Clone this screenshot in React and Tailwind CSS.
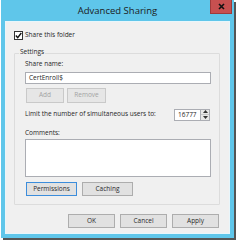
import React from "react";

const font = { fontFamily: '"Open Sans", "Noto Sans", sans-serif' };

const Btn = ({ children, className = "", disabled = false }) => (
  <div
    className={`flex items-center justify-center border text-[6.5px] ${
      disabled
        ? "border-[#c9c9c9] bg-[#e6e6e6] text-[#a3a3a3]"
        : "border-[#adadad] bg-[#e1e1e1] text-[#2a2a2a]"
    } ${className}`}
  >
    {children}
  </div>
);

const App = () => {
  return (
    <div className="w-[241px] h-[244px] bg-white" style={font}>
      <div className="pl-px">
        <div className="w-[233px] bg-[#5fc6ea] shadow-[2px_2px_0_#555]">
          {/* title bar */}
          <div className="relative h-[21px] flex items-center justify-center">
            <span className="text-[9.5px] text-[#1b1b1b] leading-none">Advanced Sharing</span>
            <div className="absolute right-[2px] top-0 w-[22px] h-[14px] bg-[#c75050] border border-[#9e3b3b] border-t-0 flex items-center justify-center">
              <svg width="7" height="7" viewBox="0 0 7 7">
                <path d="M1 1L6 6M6 1L1 6" stroke="#111" strokeWidth="1.6" />
              </svg>
            </div>
          </div>
          {/* body */}
          <div className="px-[4px] pb-[4px]">
            <div className="h-[213px] bg-[#f0f0f0] border border-[#e8f6fb] pt-[9px] pl-[8px] pr-[9px] text-[#262626]">
              <div className="flex items-center gap-[2px]">
                <div className="w-[9px] h-[9px] border border-[#333] bg-white flex items-center justify-center">
                  <svg width="7" height="7" viewBox="0 0 7 7">
                    <path d="M0.8 3.6L2.7 5.6L6.3 1" stroke="#111" strokeWidth="1.4" fill="none" />
                  </svg>
                </div>
                <span className="text-[6.5px] leading-none">Share this folder</span>
              </div>
              {/* group box */}
              <div className="relative mt-[13px] h-[152px] border border-[#dcdcdc] rounded-[1px] pt-[7px] pl-[10px] pr-[8px]">
                <span className="absolute left-[4px] -top-[5px] px-[1px] bg-[#f0f0f0] text-[6.5px] leading-none">Settings</span>
                <div className="text-[6.5px] leading-none">Share name:</div>
                <div className="mt-[4px] h-[12px] border border-[#abadb3] bg-white flex items-center pl-[3px] text-[6.5px]">
                  CertEnroll$
                </div>
                <div className="mt-[4px] flex gap-[3px] pl-px">
                  <Btn disabled className="w-[38px] h-[15px]">Add</Btn>
                  <Btn disabled className="w-[39px] h-[15px]">Remove</Btn>
                </div>
                <div className="mt-[6px] flex items-center">
                  <span className="text-[6.5px] leading-none w-[149px]">
                    Limit the number of simultaneous users to:
                  </span>
                  <div className="w-[27px] h-[12px] border border-[#abadb3] bg-white flex items-center pl-[3px] text-[6.5px] overflow-hidden">
                    16777
                  </div>
                  <div className="w-[9px] h-[12px] border border-l-0 border-[#abadb3] bg-[#e8e8e8] flex flex-col">
                    <div className="flex-1 flex items-center justify-center border-b border-[#c8c8c8]">
                      <svg width="5" height="3" viewBox="0 0 5 3"><path d="M0 3L2.5 0L5 3Z" fill="#333" /></svg>
                    </div>
                    <div className="flex-1 flex items-center justify-center">
                      <svg width="5" height="3" viewBox="0 0 5 3"><path d="M0 0L2.5 3L5 0Z" fill="#333" /></svg>
                    </div>
                  </div>
                </div>
                <div className="mt-[9px] text-[6.5px] leading-none">Comments:</div>
                <div className="mt-[3px] h-[38px] border border-[#abadb3] bg-white" />
                <div className="mt-[5px] flex gap-[5px] pl-px">
                  <Btn className="w-[51px] h-[14px] !border-[#3c8ddb]">Permissions</Btn>
                  <Btn className="w-[51px] h-[14px]">Caching</Btn>
                </div>
              </div>
              {/* footer */}
              <div className="mt-[9px] flex justify-end gap-[5px] pr-px">
                <Btn className="w-[47px] h-[14px]">OK</Btn>
                <Btn className="w-[47px] h-[14px]">Cancel</Btn>
                <Btn className="w-[47px] h-[14px]">Apply</Btn>
              </div>
            </div>
          </div>
        </div>
      </div>
    </div>
  );
};

export default App;
